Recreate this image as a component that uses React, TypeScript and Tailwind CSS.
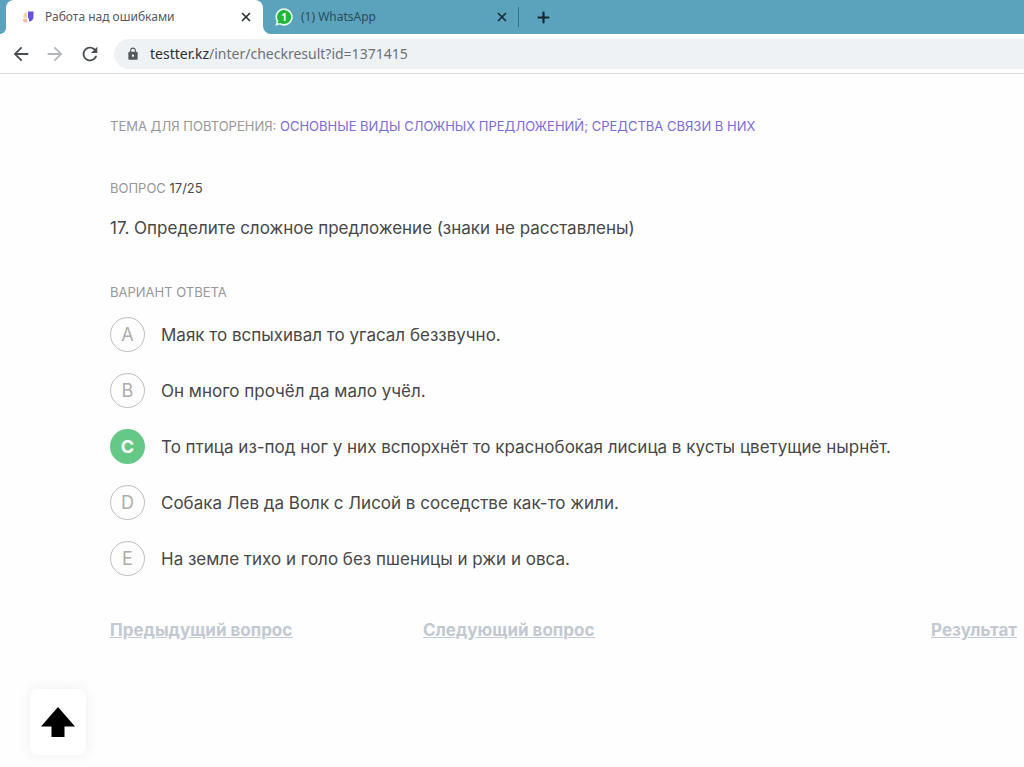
import { Plus, X } from 'lucide-react';
import { MdArrowBack, MdArrowForward, MdLock, MdRefresh } from 'react-icons/md';

interface Answer {
    letter: string;
    text: string;
    correct?: boolean;
}

const answers: Answer[] = [
    { letter: 'A', text: 'Маяк то вспыхивал то угасал беззвучно.' },
    { letter: 'B', text: 'Он много прочёл да мало учёл.' },
    { letter: 'C', text: 'То птица из-под ног у них вспорхнёт то краснобокая лисица в кусты цветущие нырнёт.', correct: true },
    { letter: 'D', text: 'Собака Лев да Волк с Лисой в соседстве как-то жили.' },
    { letter: 'E', text: 'На земле тихо и голо без пшеницы и ржи и овса.' },
];

const SiteIcon = () => (
    <svg viewBox="0 0 12 12" className="size-3 shrink-0" aria-hidden="true">
        <path d="M5 1v6H1.5V4A4.5 4.5 0 0 1 5 1z" fill="#f8d3a2" />
        <path d="M1 8h4v3.5H3A2.5 2.5 0 0 1 1 9z" fill="#f5b7a8" />
        <path d="M6 0.5h5.5V6A4.5 4.5 0 0 1 7 10.5V7.5H6z" fill="#6a4fe0" />
    </svg>
);

const WhatsAppIcon = () => (
    <span className="relative flex size-[18px] shrink-0 items-center justify-center">
        <svg viewBox="0 0 18 18" className="absolute inset-0 size-full" aria-hidden="true">
            <path d="M9 0.3a8.7 8.7 0 1 1-4.2 16.3L0.4 17.7l1.2-4.3A8.7 8.7 0 0 1 9 0.3z" fill="#e6fbe9" />
            <path d="M9 2a7 7 0 1 1-3.7 12.9l-2.6.7.7-2.5A7 7 0 0 1 9 2z" fill="#1fb83a" />
        </svg>
        <span className="relative text-[10px] leading-none font-bold text-white">1</span>
    </span>
);

const TabBar = () => (
    <div className="flex h-[34px] items-stretch bg-[#5ba2bc] pl-[6px] font-['Noto_Sans',sans-serif] text-xs">
        <div className="relative flex w-[257px] items-center rounded-t-lg bg-white pr-[10px] pl-4">
            <svg viewBox="0 0 8 8" className="absolute bottom-0 -left-[6px] size-[6px]" aria-hidden="true">
                <path d="M8 0v8H0a8 8 0 0 0 8-8z" fill="#fff" />
            </svg>
            <svg viewBox="0 0 8 8" className="absolute -right-2 bottom-0 size-2" aria-hidden="true">
                <path d="M0 0v8h8a8 8 0 0 1-8-8z" fill="#fff" />
            </svg>
            <SiteIcon />
            <span className="ml-[11px] flex-1 text-[#55595d]">Работа над ошибками</span>
            <button type="button" aria-label="Закрыть вкладку" className="text-[#2f3337]">
                <X className="size-[14px]" strokeWidth={3} />
            </button>
        </div>
        <div className="flex w-[246px] items-center pl-3">
            <WhatsAppIcon />
            <span className="ml-2 flex-1 text-[#2a4d5c]">(1) WhatsApp</span>
            <button type="button" aria-label="Закрыть вкладку" className="text-[#17303b]">
                <X className="size-[14px]" strokeWidth={3} />
            </button>
        </div>
        <div className="ml-[9px] h-5 w-px self-center bg-[#356f85]" />
        <button type="button" aria-label="Новая вкладка" className="ml-4 text-[#12262f]">
            <Plus className="size-[17px]" strokeWidth={3} />
        </button>
    </div>
);

const Toolbar = () => (
    <div className="flex h-10 items-center border-b border-[#dcdfe1] bg-white pl-[10px] font-['Noto_Sans',sans-serif]">
        <button type="button" aria-label="Назад" className="text-[#4b4f53]">
            <MdArrowBack className="size-[22px]" />
        </button>
        <button type="button" aria-label="Вперёд" className="ml-3 text-[#b4b7ba]">
            <MdArrowForward className="size-[22px]" />
        </button>
        <button type="button" aria-label="Обновить" className="ml-[13px] text-[#4b4f53]">
            <MdRefresh className="size-[22px]" />
        </button>
        <div className="ml-[13px] flex h-[30px] flex-1 items-center rounded-l-full bg-[#eff2f5] pl-3">
            <MdLock className="size-[14px] text-[#54585c]" />
            <a href="#" className="ml-[10px] text-sm text-[#6c7175]">
                <span className="text-[#2b2e31]">testter.kz</span>/inter/checkresult?id=1371415
            </a>
        </div>
    </div>
);

const AnswerRow = ({ answer }: { answer: Answer }) => (
    <li className="flex items-center gap-4">
        <span
            className={
                answer.correct
                    ? 'flex size-[35px] shrink-0 items-center justify-center rounded-full bg-[#65c887] text-lg font-bold text-white'
                    : 'flex size-[35px] shrink-0 items-center justify-center rounded-full border border-[#bdbdbd] text-lg text-[#adadad]'
            }
        >
            {answer.letter}
        </span>
        <span className="text-[17px] leading-6">{answer.text}</span>
    </li>
);

export default function App() {
    return (
        <div className="flex min-h-screen flex-col bg-[#fefefe] font-['Inter',sans-serif] text-[#484848]">
            <header>
                <TabBar />
                <Toolbar />
            </header>

            <main className="pt-[42px] pr-[7px] pl-[110px]">
                <p className="text-[13px] leading-5 text-[#989898] uppercase">
                    Тема для повторения:{' '}
                    <a href="#" className="text-[#7b6bd6]">
                        Основные виды сложных предложений; средства связи в них
                    </a>
                </p>

                <p className="mt-[42px] text-[13px] leading-5 text-[#989898] uppercase">
                    Вопрос <span className="text-[#484848]">17/25</span>
                </p>
                <h1 className="mt-[18px] text-[17px] leading-6">
                    17. Определите сложное предложение (знаки не расставлены)
                </h1>

                <h2 className="mt-[42px] text-[13px] leading-5 text-[#989898] uppercase">Вариант ответа</h2>
                <ol className="mt-[15px] flex flex-col gap-[21px]">
                    {answers.map((answer) => (
                        <AnswerRow key={answer.letter} answer={answer} />
                    ))}
                </ol>

                {/* Question navigation */}
                <nav className="mt-[42px] grid grid-cols-3 gap-8 text-[17px] leading-6 font-bold text-[#c2c9d2] underline">
                    <a href="#">Предыдущий вопрос</a>
                    <a href="#">Следующий вопрос</a>
                    <a href="#" className="justify-self-end">Результат</a>
                </nav>
            </main>

            {/* Scroll to top */}
            <button
                type="button"
                aria-label="Наверх"
                className="fixed bottom-3 left-[30px] flex h-[66px] w-14 items-center justify-center rounded-lg bg-white text-black shadow-[0_0_14px_rgba(0,0,0,0.07)]"
            >
                <svg viewBox="0 0 34 30" className="h-[30px] w-[34px]" aria-hidden="true">
                    <path d="M17 0l17 19.5H23.5V30h-13V19.5H0z" fill="currentColor" />
                </svg>
            </button>
        </div>
    );
}
